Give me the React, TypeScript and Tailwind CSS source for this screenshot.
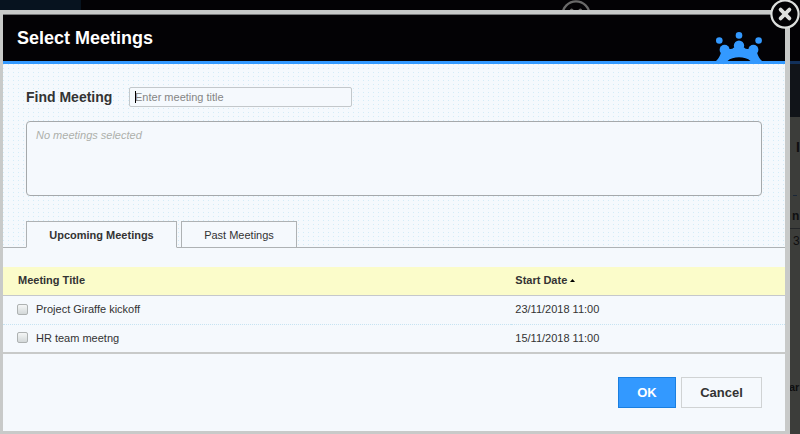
import { useState } from "react";

type Meeting = { id: string; title: string; start: string };

const UPCOMING: Meeting[] = [
  { id: "giraffe", title: "Project Giraffe kickoff", start: "23/11/2018 11:00" },
  { id: "hr", title: "HR team meetng", start: "15/11/2018 11:00" },
];

function CloseIcon({ className }: { className?: string }) {
  return (
    <svg viewBox="0 0 30 30" className={className} aria-hidden="true">
      <circle
        cx="15"
        cy="15"
        r="13.6"
        fill="#030205"
        stroke="currentColor"
        strokeWidth="2.2"
      />
      <path
        d="M10.6 10.6l8.8 8.8M19.4 10.6l-8.8 8.8"
        fill="none"
        stroke="currentColor"
        strokeWidth="3.8"
        strokeLinecap="round"
      />
    </svg>
  );
}

function Logo() {
  return (
    <svg
      viewBox="0 0 46 29"
      className="mr-[23px] h-[29px] w-[46px] self-end text-[#3399ff]"
      fill="currentColor"
      aria-hidden="true"
    >
      <circle cx="3.3" cy="8.5" r="3.3" />
      <circle cx="23" cy="3.4" r="3.3" />
      <circle cx="42.6" cy="8.5" r="3.3" />
      <circle cx="8.6" cy="17.8" r="5" />
      <circle cx="23" cy="13.8" r="5.2" />
      <circle cx="37.4" cy="17.8" r="5" />
      <path d="M0 29C2.500 27 4 24 5 20.500L12 16.500Q15.500 18 18 15.500H28Q30.500 18 34 16.500L41 20.500C42 24 43.500 27 46 29H34.500C29.500 24 16.500 24 11.500 29Z" />
    </svg>
  );
}

// The dimmed page that sits under the dialog
function Backdrop() {
  return (
    <div className="absolute inset-0 overflow-hidden bg-[#3c3d3a]" aria-hidden="true">
      <div className="h-[61px] bg-[#030205]">
        <div className="h-[10px] w-[81px] bg-[#07131f]" />
      </div>
      <div className="h-[3px] bg-[#12305a]" />
      <div className="h-[53px] bg-[#111419]" />
      <CloseIcon className="absolute top-0 left-[561px] h-[30px] w-[30px] text-[#696969]" />
      <div className="absolute top-0 right-0 h-full w-[10px] overflow-hidden text-[12px] leading-4 text-[#0f0f10]">
        <span className="absolute top-[139px] left-[6px] text-[14px] font-bold">I</span>
        <div className="absolute top-[195px] left-[3px] h-px w-1 bg-[#1b2838]" />
        <span className="absolute top-[208px] left-[2px] font-bold">n</span>
        <div className="absolute top-[228px] h-px w-full bg-[#242628]" />
        <span className="absolute top-[233px] left-[3px]">3</span>
        <span className="absolute top-[379px] -left-px text-[11px] font-bold">ar</span>
      </div>
    </div>
  );
}

export default function App() {
  const [query, setQuery] = useState("");
  const [tab, setTab] = useState<"upcoming" | "past">("upcoming");
  const [selected, setSelected] = useState<string[]>([]);

  const rows = tab === "upcoming" ? UPCOMING : [];
  const titles = UPCOMING.filter((m) => selected.includes(m.id)).map((m) => m.title);

  function toggle(id: string) {
    setSelected((s) => (s.includes(id) ? s.filter((x) => x !== id) : [...s, id]));
  }

  return (
    <div className="relative min-h-screen pt-[10px] pr-[10px] font-['Liberation_Sans',Arial,sans-serif] text-[11px] leading-4 text-[#333333]">
      <Backdrop />

      <div
        role="dialog"
        aria-labelledby="dialog-title"
        className="relative border-t-4 border-r-[5px] border-b-[3px] border-l-[3px] border-[#c8cac9] bg-[#f5f9fd]"
      >
        <header className="flex h-[50px] items-center justify-between border-t border-b-[3px] border-t-[#77787a] border-b-[#3399ff] bg-[#030205] pl-[14px]">
          <h1 id="dialog-title" className="text-[18px] leading-6 font-bold text-white">
            Select Meetings
          </h1>
          <Logo />
        </header>

        <button
          type="button"
          aria-label="Close"
          className="absolute -top-[15px] -right-[15px] h-[30px] w-[30px] rounded-full text-[#dddfde]"
        >
          <CloseIcon className="h-full w-full" />
        </button>

        <section className="bg-[conic-gradient(from_270deg_at_1px_1px,#d3ecf8_90deg,transparent_90deg),conic-gradient(from_270deg_at_4px_4px,transparent_90deg,transparent_90deg)] bg-size-[5px_4px] pt-[23px]">
          <div className="flex items-center pl-[23px]">
            <label htmlFor="find" className="w-[103px] text-[14px] leading-5 font-bold">
              Find Meeting
            </label>
            <div className="relative">
              <input
                id="find"
                type="text"
                value={query}
                onChange={(e) => setQuery(e.target.value)}
                placeholder="Enter meeting title"
                className="block h-5 w-[223px] rounded-xs border border-[#c3c8cb] bg-[#f5f9fd] px-[5px] text-[11px] outline-none placeholder:text-[#858585]"
              />
              {query === "" && (
                <span className="absolute top-1 left-[6px] h-3 w-px bg-black" />
              )}
            </div>
          </div>

          <div className="mt-[14px] mr-[23px] ml-[23px] h-[75px] rounded-sm border border-[#a5a9ab] bg-[#f5f9fd] px-[9px] py-[5px]">
            {titles.length === 0 ? (
              <p className="text-[#adb0ab] italic">No meetings selected</p>
            ) : (
              <p>{titles.join(", ")}</p>
            )}
          </div>

          <div
            role="tablist"
            className="mt-[25px] flex gap-1 border-b border-[#aeb2b4] pl-[23px]"
          >
            <button
              type="button"
              role="tab"
              aria-selected={tab === "upcoming"}
              onClick={() => setTab("upcoming")}
              className={`-mb-px h-[27px] w-[151px] border border-[#aeb2b4] bg-[#f5f9fd] ${
                tab === "upcoming" ? "border-b-[#f5f9fd] font-bold" : ""
              }`}
            >
              Upcoming Meetings
            </button>
            <button
              type="button"
              role="tab"
              aria-selected={tab === "past"}
              onClick={() => setTab("past")}
              className={`-mb-px h-[27px] w-[116px] border border-[#aeb2b4] bg-[#f5f9fd] ${
                tab === "past" ? "border-b-[#f5f9fd] font-bold" : ""
              }`}
            >
              Past Meetings
            </button>
          </div>
        </section>

        <table className="mt-[19px] w-full table-fixed border-separate border-spacing-0 text-left">
          <thead>
            <tr className="h-[29px] bg-[#fbfcca]">
              <th className="w-[65%] border-b border-[#c5c8cc] pb-[2px] pl-[15px] font-bold">
                Meeting Title
              </th>
              <th
                aria-sort="ascending"
                className="border-b border-[#c5c8cc] pb-[2px] pl-1 font-bold"
              >
                <span className="flex items-center gap-[3px]">
                  Start Date
                  <svg viewBox="0 0 5 3" className="h-[3px] w-[5px]" aria-hidden="true">
                    <path d="M2.500 0L5 3H0Z" />
                  </svg>
                </span>
              </th>
            </tr>
          </thead>
          <tbody>
            {rows.map((m, i) => {
              const line =
                i < rows.length - 1
                  ? "border-b border-dotted border-[#c6e3f2]"
                  : "border-b-2 border-[#c8cac9]";
              return (
                <tr key={m.id} className="h-[29px]">
                  <td className={`pb-[2px] pl-[14px] ${line}`}>
                    <label className="flex items-center gap-2">
                      <input
                        type="checkbox"
                        checked={selected.includes(m.id)}
                        onChange={() => toggle(m.id)}
                        className="h-[11px] w-[11px] appearance-none rounded-xs border border-[#aeb2b2] bg-linear-to-b from-[#f4f6f6] to-[#d3d8d9] checked:bg-[#3399ff]"
                      />
                      {m.title}
                    </label>
                  </td>
                  <td className={`pb-[2px] pl-1 ${line}`}>{m.start}</td>
                </tr>
              );
            })}
          </tbody>
        </table>

        <footer className="flex justify-end gap-[5px] pt-[23px] pr-[23px] pb-[23px] text-[13px] font-bold">
          <button
            type="button"
            className="h-[31px] w-[58px] border border-[#1a7fe0] bg-[#3399ff] text-white"
          >
            OK
          </button>
          <button type="button" className="h-[31px] w-[81px] border border-[#d0d3d4]">
            Cancel
          </button>
        </footer>
      </div>
    </div>
  );
}
